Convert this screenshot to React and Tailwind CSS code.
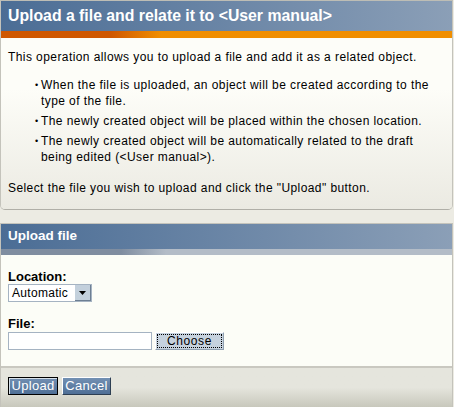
import React from "react";

export default function App() {
  return (
    <div className="w-[454px] h-[407px] overflow-hidden bg-[#ecebe3] font-['Liberation_Sans',Arial,sans-serif] text-black">
      {/* Top box */}
      <div className="mr-[1px] border border-t-[#bdbdb5] border-x-[#c4c3bb] border-b-[#b0afa7] rounded-b-[5px] overflow-hidden">
        <div className="h-[30px] bg-gradient-to-r from-[#4b6d95] to-[#8b9fb7] px-[7px] flex items-center text-white font-bold text-[15.8px]">
          Upload a file and relate it to &lt;User manual&gt;
        </div>
        <div className="h-[7px] bg-[linear-gradient(to_right,#cf5700_0px,#cf5700_110px,#f08e00_160px,#f08e00_100%)]" />
        <div className="bg-gradient-to-b from-[#fdfdf8] from-30% to-[#ebeae2] px-[7px] pt-[11px] pb-[13px] text-[12px] leading-[16px] tracking-[0.42px]">
          <p>This operation allows you to upload a file and add it as a related object.</p>
          <ul className="mt-[12px] pl-[27px] flex flex-col gap-[4px]">
            <li className="flex gap-[4px]">
              <span className="w-[2px] text-[9px]">•</span>
              <span>When the file is uploaded, an object will be created according to the type of the file.</span>
            </li>
            <li className="flex gap-[4px]">
              <span className="w-[2px] text-[9px]">•</span>
              <span>The newly created object will be placed within the chosen location.</span>
            </li>
            <li className="flex gap-[4px]">
              <span className="w-[2px] text-[9px]">•</span>
              <span>The newly created object will be automatically related to the draft being edited (&lt;User manual&gt;).</span>
            </li>
          </ul>
          <p className="mt-[15px]">Select the file you wish to upload and click the "Upload" button.</p>
        </div>
      </div>

      {/* Upload file box */}
      <div className="mt-[13px] mr-[1px] border-x border-t border-x-[#c4c3bb] border-t-[#c4c3bb]">
        <div className="h-[25px] bg-gradient-to-r from-[#4b6d95] to-[#8b9fb7] px-[7px] flex items-center text-white font-bold text-[13.5px]">
          Upload file
        </div>
        <div className="h-[6px] bg-[linear-gradient(to_right,#7f8da0_0px,#7f8da0_120px,#b3bcc7_165px,#b3bcc7_100%)]" />
        <div className="bg-[#fcfdf7] px-[7px] pt-[15px] pb-[16px]">
          <div className="font-bold text-[13px] leading-[14px]">Location:</div>
          <div className="w-[84px] h-[18px] border border-[#a5b3c2] bg-white flex items-center">
            <span className="flex-1 pl-[3px] text-[12px] leading-[16px] tracking-[0.3px]">Automatic</span>
            <span className="w-[16px] h-[16px] bg-[#c3d0dc] border-r border-b border-[#6d7f93] flex items-center justify-center">
              <svg width="8" height="4" viewBox="0 0 8 4">
                <path d="M0 0h7L3.5 4z" fill="#000" />
              </svg>
            </span>
          </div>
          <div className="mt-[15px] font-bold text-[13px] leading-[14px]">File:</div>
          <div className="mt-[1px] flex gap-[3px]">
            <div className="w-[144px] h-[18px] border border-[#a5b3c2] bg-white" />
            <button className="w-[69px] h-[18px] bg-[#c6d2de] border border-[#90a0b0] border-t-white border-l-white p-[1px]">
              <span className="flex h-full items-center justify-center border border-dotted border-black text-[12px] leading-[14px] tracking-[0.6px]">
                Choose
              </span>
            </button>
          </div>
        </div>
        <div className="border-t-2 border-[#c9c8c0] bg-gradient-to-b from-[#e5e5dd] from-50% to-[#c8c8bc] h-[41px] px-[7px] pt-[9px] flex gap-[4px] items-start">
          <button className="w-[50px] h-[18px] border border-black bg-gradient-to-b from-[#7390b3] to-[#4f6f96] text-white text-[13px] leading-[14px] tracking-[0.3px] shadow-[inset_1px_1px_0_#d6e0ea]">
            Upload
          </button>
          <button className="w-[49px] h-[18px] border border-t-white border-l-white border-r-[#2d3e52] border-b-[#2d3e52] bg-gradient-to-b from-[#7390b3] to-[#4f6f96] text-white text-[13px] leading-[14px] tracking-[0.3px]">
            Cancel
          </button>
        </div>
      </div>
    </div>
  );
}
